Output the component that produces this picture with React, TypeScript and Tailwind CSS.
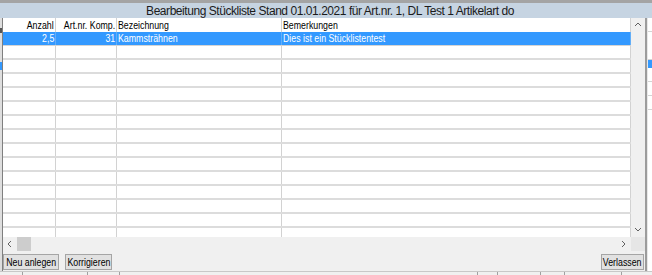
const columns = [
  { label: 'Anzahl', width: 'w-[53px]', align: 'right' },
  { label: 'Art.nr. Komp.', width: 'w-[61px]', align: 'right' },
  { label: 'Bezeichnung', width: 'w-[165px]', align: 'left' },
  { label: 'Bemerkungen', width: 'w-[349px]', align: 'left' },
];

const selected = ['2,5', '31', 'Kammsträhnen', 'Dies ist ein Stücklistentest'];

const emptyRows = Array.from({ length: 14 });

function Txt({ children, align = 'left' }: { children: React.ReactNode; align?: string }) {
  return (
    <span
      className={`inline-block whitespace-nowrap scale-x-[0.8] ${
        align === 'right' ? 'origin-right' : align === 'center' ? 'origin-center' : 'origin-left'
      }`}
    >
      {children}
    </span>
  );
}

function Chevron({ dir }: { dir: 'up' | 'down' | 'left' | 'right' }) {
  const pts = {
    up: '1,5 4,2 7,5',
    down: '1,2 4,5 7,2',
    left: '5,1 2,4 5,7',
    right: '2,1 5,4 2,7',
  }[dir];
  return (
    <svg width="8" height="8" viewBox="0 0 8 8">
      <polyline points={pts} fill="none" stroke="#606060" strokeWidth="1" />
    </svg>
  );
}

function Button({ label, width }: { label: string; width: string }) {
  return (
    <div
      className={`${width} h-[16px] flex items-center justify-center bg-[#e1e1e1] border border-[#a5a5a5] text-[11px] leading-none text-black`}
    >
      <Txt align="center">{label}</Txt>
    </div>
  );
}

export default function App() {
  return (
    <div
      className="w-[652px] h-[275px] bg-[#f0f0f0] flex flex-col overflow-hidden"
      style={{ fontFamily: '"Liberation Sans", Arial, sans-serif' }}
    >
      {/* Window top edge */}
      <div className="h-[3px] bg-[#a4a4a4]" />

      {/* Title */}
      <div className="h-[15px] bg-[#c6d4e2] flex items-center justify-center text-[12px] tracking-[-0.45px] leading-none text-[#1b1b1b] pl-[8px]">
        Bearbeitung Stückliste Stand 01.01.2021 für Art.nr. 1, DL Test 1 Artikelart do
      </div>

      <div className="flex h-[253px]">
        {/* underlying window, left edge */}
        <div className="w-[2px] flex flex-col bg-[#dedede]">
          <div className="h-[10px]" />
          <div className="h-[5px] bg-[#555]" />
          <div className="h-[29px]" />
          <div className="h-[8px] bg-[#3399ff]" />
        </div>
        <div className="w-[1px] bg-[#7f7f7f]" />

        {/* Window body */}
        <div className="w-[642px] flex flex-col bg-[#f0f0f0]">
          <div className="flex h-[219px]">
            {/* Grid */}
            <div className="w-[628px] bg-white overflow-hidden flex flex-col text-[11px] leading-none">
              <div className="flex h-[14px] shrink-0">
                {columns.map((c) => (
                  <div
                    key={c.label}
                    className={`${c.width} border-r border-[#d2d2d2] flex items-center px-[1px] text-black ${
                      c.align === 'right' ? 'justify-end' : 'justify-start'
                    }`}
                  >
                    <Txt align={c.align}>{c.label}</Txt>
                  </div>
                ))}
              </div>
              <div className="flex h-[14px] shrink-0 bg-[#3399ff] border-b border-[#d4d4d4]">
                {columns.map((c, i) => (
                  <div
                    key={c.label}
                    className={`${c.width} border-r border-[#62aef8] flex items-center px-[1px] text-white ${
                      c.align === 'right' ? 'justify-end' : 'justify-start'
                    }`}
                  >
                    <Txt align={c.align}>{selected[i]}</Txt>
                  </div>
                ))}
              </div>
              {emptyRows.map((_, r) => (
                <div key={r} className="flex h-[14px] shrink-0 border-b-2 border-[#dcdcdc]">
                  {columns.map((c) => (
                    <div key={c.label} className={`${c.width} border-r border-[#d2d2d2]`} />
                  ))}
                </div>
              ))}
            </div>

            {/* Vertical scrollbar */}
            <div className="w-[14px] bg-[#f0f0f0] flex flex-col justify-between items-center py-[3px]">
              <Chevron dir="up" />
              <Chevron dir="down" />
            </div>
          </div>

          {/* Horizontal scrollbar */}
          <div className="flex h-[14px]">
            <div className="w-[628px] bg-[#f0f0f0] flex items-center">
              <div className="w-[14px] flex justify-center">
                <Chevron dir="left" />
              </div>
              <div className="w-[14px] h-full bg-[#cdcdcd]" />
              <div className="flex-1" />
              <div className="w-[14px] flex justify-center">
                <Chevron dir="right" />
              </div>
            </div>
            <div className="w-[14px] bg-[#e6e6e6]" />
          </div>

          {/* Buttons */}
          <div className="flex h-[20px] items-start pt-[3px] pr-[1px]">
            <Button label="Neu anlegen" width="w-[56px]" />
            <div className="w-[6px]" />
            <Button label="Korrigieren" width="w-[47px]" />
            <div className="flex-1" />
            <Button label="Verlassen" width="w-[43px]" />
          </div>
        </div>

        {/* Window right edge */}
        <div className="w-[2px] bg-[#9c9c9c]" />

        {/* underlying window, right edge */}
        <div className="w-[5px] bg-white flex flex-col overflow-hidden text-[11px] leading-none border-l border-[#e8e8e8]">
          <div className="h-[14px] border-b border-[#d4d4d4]" />
          <div className="h-[28px] border-b border-[#d4d4d4]" />
          <div className="h-[8px] bg-[#3399ff]" />
          <div className="h-[14px] border-b border-[#d4d4d4]" />
          <div className="h-[14px] border-b border-[#d4d4d4]" />
          <div className="h-[14px] border-b border-[#d4d4d4]" />
        </div>
      </div>

      {/* underlying grid below the window */}
      <div className="flex h-[4px] border-t border-[#c8c8c8]">
        <div className="w-[23px] border-r border-[#a0a0a0]" />
        <div className="w-[65px] border-r border-[#a0a0a0]" />
        <div className="w-[32px] border-r border-[#a0a0a0]" />
        <div className="w-[358px] border-r border-[#a0a0a0]" />
        <div className="w-[20px] border-r border-[#a0a0a0]" />
        <div className="w-[43px] border-r border-[#a0a0a0]" />
        <div className="w-[24px] border-r border-[#a0a0a0]" />
        <div className="w-[57px] border-r border-[#a0a0a0]" />
      </div>
    </div>
  );
}
